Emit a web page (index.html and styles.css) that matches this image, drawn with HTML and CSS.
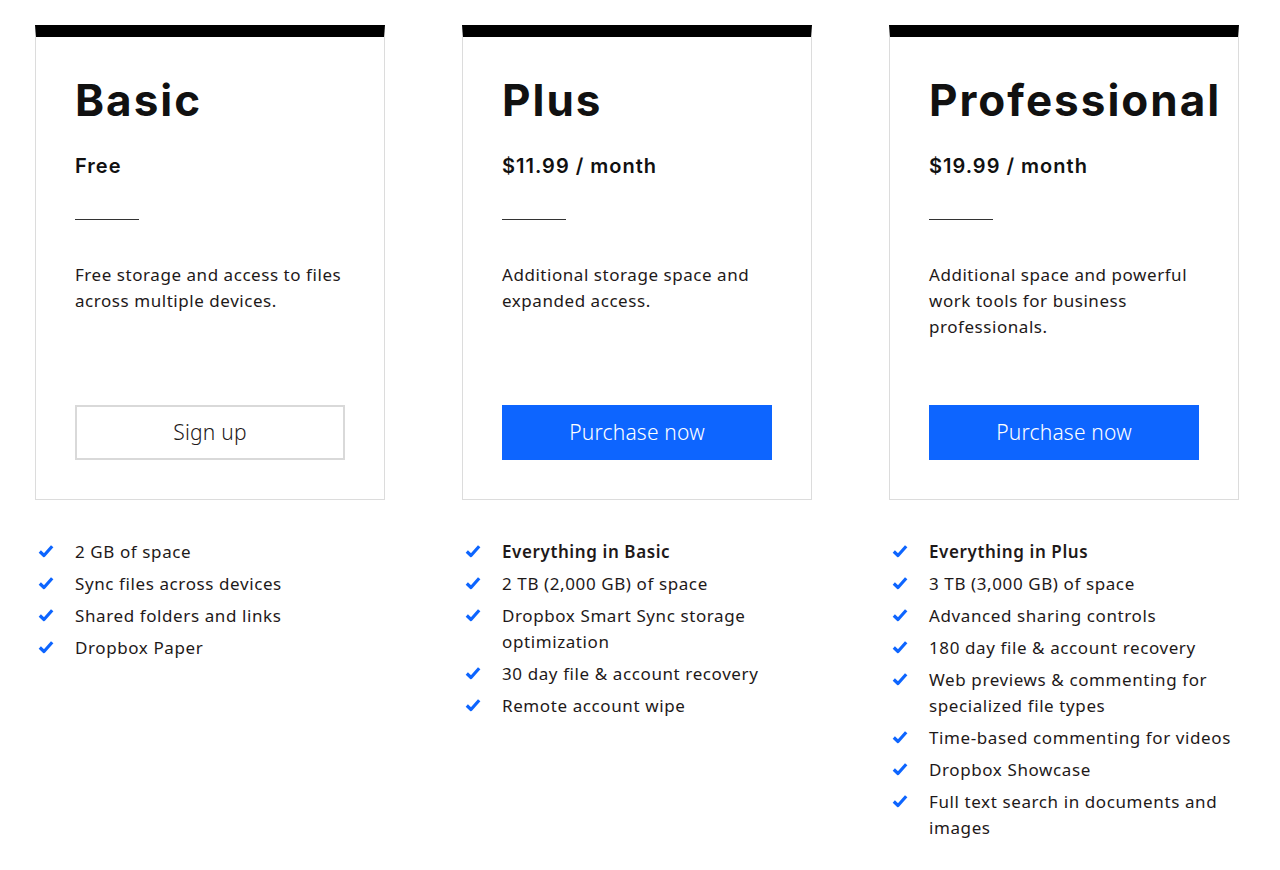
FILE: index.html
```html
<!DOCTYPE html>
<html lang="en">
<head>
  <meta charset="UTF-8">
  <meta name="viewport" content="width=device-width, initial-scale=1.0">
  <title>Plans</title>
  <link rel="stylesheet" href="styles.css">
</head>
<body>
  <div class="plans">

    <div class="plan">
      <div class="card">
        <h2 class="plan-name">Basic</h2>
        <div class="price">Free</div>
        <hr class="rule">
        <p class="desc">Free storage and access to files across multiple devices.</p>
        <a href="#" class="btn btn-outline">Sign up</a>
      </div>
      <ul class="features">
        <li>2 GB of space</li>
        <li>Sync files across devices</li>
        <li>Shared folders and links</li>
        <li>Dropbox Paper</li>
      </ul>
    </div>

    <div class="plan">
      <div class="card">
        <h2 class="plan-name">Plus</h2>
        <div class="price">$11.99 / month</div>
        <hr class="rule">
        <p class="desc">Additional storage space and expanded access.</p>
        <a href="#" class="btn btn-blue">Purchase now</a>
      </div>
      <ul class="features">
        <li><b>Everything in Basic</b></li>
        <li>2 TB (2,000 GB) of space</li>
        <li>Dropbox Smart Sync storage optimization</li>
        <li>30 day file &amp; account recovery</li>
        <li>Remote account wipe</li>
      </ul>
    </div>

    <div class="plan">
      <div class="card">
        <h2 class="plan-name">Professional</h2>
        <div class="price">$19.99 / month</div>
        <hr class="rule">
        <p class="desc">Additional space and powerful work tools for business professionals.</p>
        <a href="#" class="btn btn-blue">Purchase now</a>
      </div>
      <ul class="features">
        <li><b>Everything in Plus</b></li>
        <li>3 TB (3,000 GB) of space</li>
        <li>Advanced sharing controls</li>
        <li>180 day file &amp; account recovery</li>
        <li>Web previews &amp; commenting for specialized file types</li>
        <li>Time-based commenting for videos</li>
        <li>Dropbox Showcase</li>
        <li>Full text search in documents and images</li>
      </ul>
    </div>

  </div>
</body>
</html>
```

FILE: styles.css
```css
body {
  margin: 0;
  padding: 0;
  background-color: #fff;
  color: #1e1919;
  font-family: "Noto Sans", Arial, sans-serif;
}

.plans {
  display: flex;
  gap: 77px;
  padding: 25px 0 0 35px;
}

.plan {
  width: 350px;
}

.card {
  border: 1px solid #dcdcdc;
  border-top: 12px solid #000;
  padding: 37px 39px 39px 39px;
  height: 475px;
  box-sizing: border-box;
  display: flex;
  flex-direction: column;
}

.plan-name {
  font-family: Inter, sans-serif;
  font-weight: 700;
  font-size: 44px;
  line-height: 52px;
  letter-spacing: 2px;
  margin: 0;
  color: #111;
}

.price {
  font-family: Inter, sans-serif;
  font-weight: 600;
  font-size: 20px;
  letter-spacing: 1px;
  margin-top: 28px;
  color: #111;
}

.rule {
  width: 64px;
  border: 0;
  border-top: 1px solid #333;
  margin: 41px 0 0 0;
}

.desc {
  font-size: 17px;
  line-height: 26px;
  letter-spacing: 0.55px;
  margin: 42px 0 0 0;
}

.btn {
  margin-top: auto;
  display: block;
  height: 55px;
  line-height: 55px;
  text-align: center;
  font-size: 21px;
  font-weight: 300;
  letter-spacing: 0.2px;
  text-decoration: none;
  box-sizing: border-box;
}

.btn-outline {
  border: 2px solid #d9d9d9;
  line-height: 51px;
  color: #1e1919;
}

.btn-blue {
  background-color: #0d65ff;
  color: #fff;
}

.features {
  list-style: none;
  margin: 39px 0 0 0;
  padding: 0;
}

.features li {
  position: relative;
  padding-left: 40px;
  font-size: 17px;
  line-height: 26px;
  letter-spacing: 0.6px;
  margin-bottom: 6px;
}

.features li::before {
  content: "";
  position: absolute;
  left: 3px;
  top: 5px;
  width: 16px;
  height: 14px;
  background: url("data:image/svg+xml;utf8,<svg xmlns='http://www.w3.org/2000/svg' viewBox='0 0 16 14'><path d='M1.8 7.5 L6 11.5 L14.2 2.2' fill='none' stroke='%230d65ff' stroke-width='3.2' stroke-linejoin='round'/></svg>") no-repeat;
}

.features b {
  font-weight: 600;
}
```
